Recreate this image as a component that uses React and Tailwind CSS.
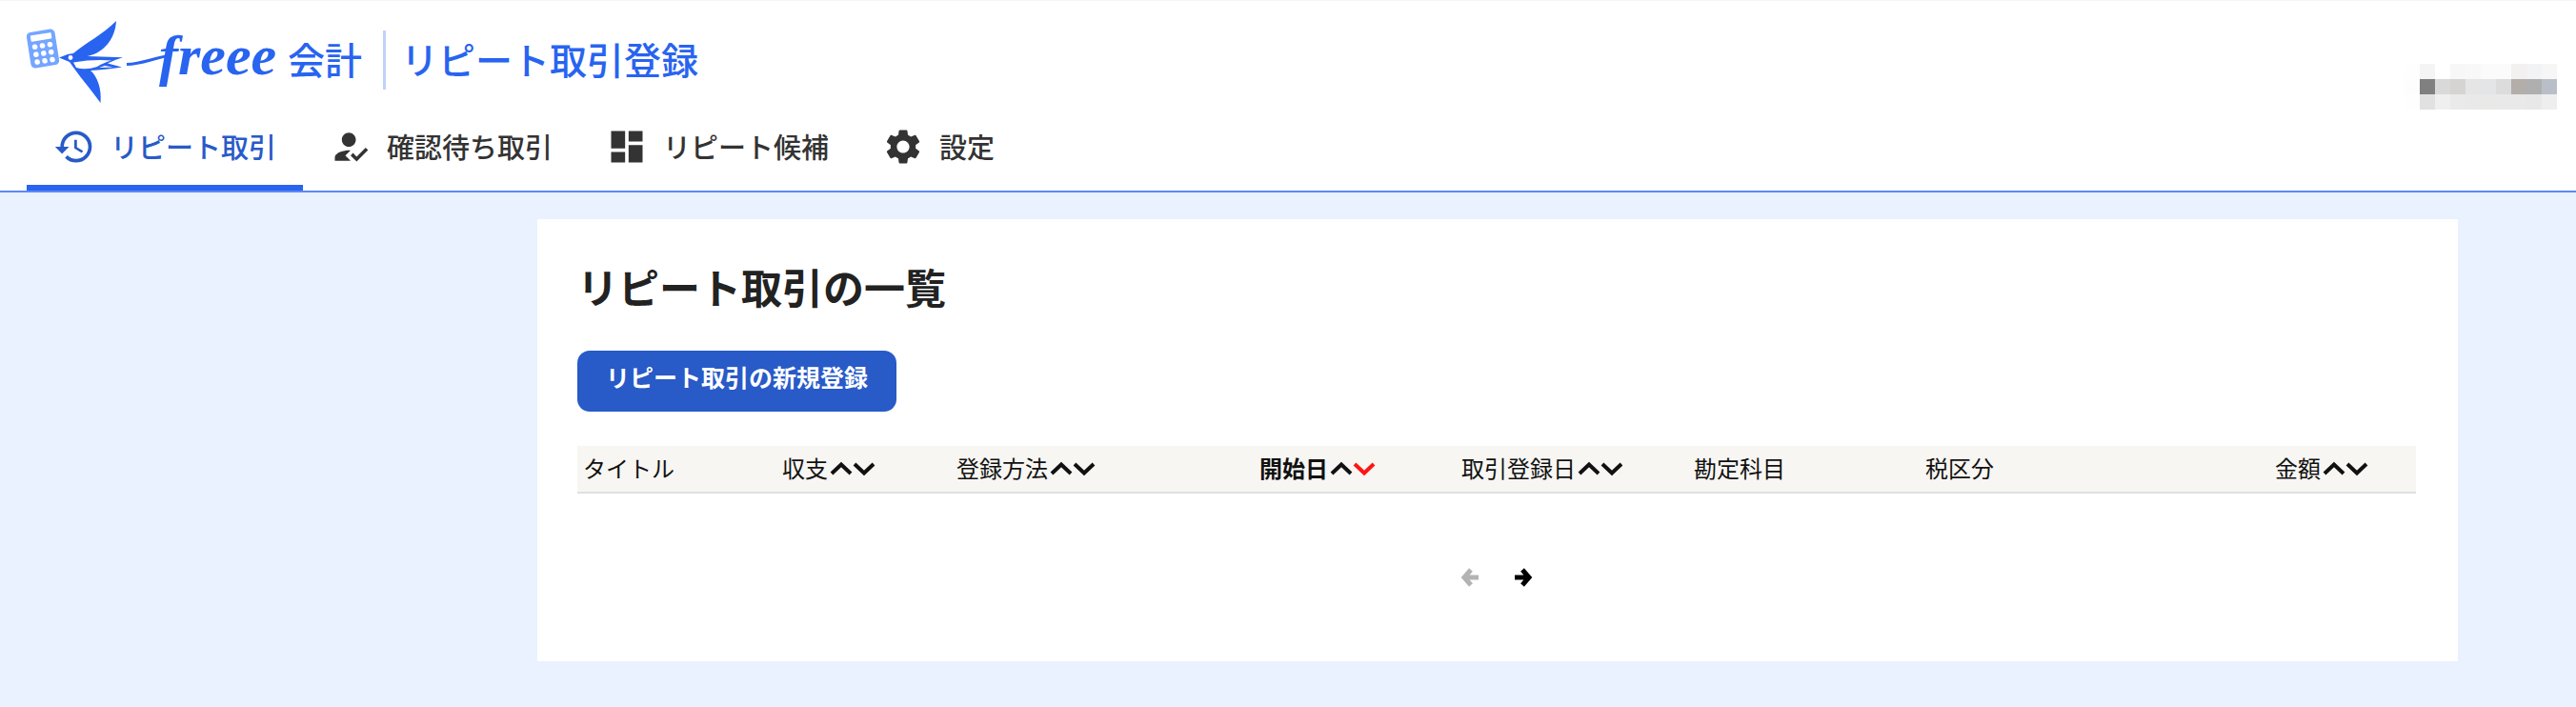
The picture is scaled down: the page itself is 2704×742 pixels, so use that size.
import React from 'react';
import { MdHistory, MdHowToReg, MdDashboard, MdSettings } from 'react-icons/md';

const navItems = [
    { label: 'リピート取引', icon: MdHistory, active: true },
    { label: '確認待ち取引', icon: MdHowToReg },
    { label: 'リピート候補', icon: MdDashboard },
    { label: '設定', icon: MdSettings },
];

const columns = [
    { label: 'タイトル', width: 'w-[209px]' },
    { label: '収支', width: 'w-[183px]', sortable: true },
    { label: '登録方法', width: 'w-[318px]', sortable: true },
    { label: '開始日', width: 'w-[212px]', sortable: true, sorted: 'desc' },
    { label: '取引登録日', width: 'w-[244px]', sortable: true },
    { label: '勘定科目', width: 'w-[243px]' },
    { label: '税区分', width: 'w-[367px]' },
    { label: '金額', width: 'w-[154px]', sortable: true },
];

// pixelated account name
const maskColors = [
    'bg-[#fefefe]', 'bg-[#f4f4f4]', 'bg-[#ffffff]', 'bg-[#f7f7f7]', 'bg-[#f8f8f8]', 'bg-[#fbfbfb]', 'bg-[#fbfbfb]', 'bg-[#f3f1f0]', 'bg-[#f1f3f5]', 'bg-[#f6f6f6]',
    'bg-[#fdfdfd]', 'bg-[#808080]', 'bg-[#d9d9d9]', 'bg-[#d5d4d2]', 'bg-[#e5e5e5]', 'bg-[#e3e5e7]', 'bg-[#dcdcdc]', 'bg-[#b4aeaa]', 'bg-[#afafaf]', 'bg-[#babec8]',
    'bg-[#fefefe]', 'bg-[#e1e1e1]', 'bg-[#efefef]', 'bg-[#eaeaea]', 'bg-[#e9e9e9]', 'bg-[#e9e9e7]', 'bg-[#e9e9e9]', 'bg-[#e9e9e9]', 'bg-[#e8e8e8]', 'bg-[#eeeeee]',
];

const Logo = () => (
    <svg width="264" height="90" viewBox="28 18 264 90" fill="#2864f0">
        <g transform="rotate(-9 45 51)">
            <rect x="30" y="32" width="30" height="38" rx="4.5" fill="#74a6ff" />
            <rect x="34" y="35.5" width="22" height="6.5" rx="1" fill="#fff" />
            {[48, 56, 64].map((y) =>
                [37, 45, 53].map((x) => <circle key={`${x}-${y}`} cx={x} cy={y} r="2.8" fill="#fff" />)
            )}
        </g>
        <path d="M62 60.5L71 57L77 56C90 45 108 36 122 22C121 40 110 55 92 59L129 60.3Q120 63 113 66.5L128 70.5Q110 73 95 74C102 80 107 93 105.5 108C94 92 84 81 73 65Z" />
        <path d="M77 65.5Q98 62 117 63.5Q108 66 102 70Q90 74 80 71Z" fill="#fff" />
        <path d="M110 69L119 70.5L104 71Z" fill="#fff" />
        <circle cx="74" cy="60.5" r="2.4" fill="#fff" />
        <path d="M133 67.5C150 67 160 61 180 58" fill="none" stroke="#2864f0" strokeWidth="3" />
        <text x="167" y="78" fontSize="60" className="font-['Liberation_Serif',serif] font-bold italic">freee</text>
    </svg>
);

const Chevron = ({ down, color }) => (
    <svg width="24" height="16" viewBox="0 0 24 16" fill="none" stroke={color} strokeWidth="4">
        <path d={down ? 'M2 3L12 12.5L22 3' : 'M2 13L12 3.5L22 13'} />
    </svg>
);

const Arrow = ({ left }) => (
    <svg width="20" height="20" viewBox="0 0 20 20" fill="none" stroke="currentColor" strokeWidth="5">
        <path d={left ? 'M19 10H5M11 2L4 10L11 18' : 'M1 10H15M9 2L16 10L9 18'} />
    </svg>
);

const ColumnHeader = ({ label, width, sortable, sorted }) => (
    <th className={`${width} px-1.5 py-0 text-left ${sorted ? 'font-bold' : 'font-normal'}`}>
        <div className="flex h-12 items-center pb-0.5 whitespace-nowrap">
            {label}
            {sortable && (
                <span className="mt-0.5 ml-0.5 flex">
                    <button type="button" aria-label={`${label} 昇順`}>
                        <Chevron color={sorted === 'asc' ? '#ff1414' : '#111'} />
                    </button>
                    <button type="button" aria-label={`${label} 降順`}>
                        <Chevron down color={sorted === 'desc' ? '#ff1414' : '#111'} />
                    </button>
                </span>
            )}
        </div>
    </th>
);

const Header = () => (
    <header className="flex justify-between border-t border-b-2 border-t-[#f5f5f5] border-b-[#5b89f5] bg-white">
        <div>
            <div className="flex items-center pt-[17px] pl-7 text-[39px] leading-[60px] font-medium text-[#2864f0]">
                <Logo />
                <span className="ml-2.5 pb-1">会計</span>
                <span className="mr-4 ml-[22px] h-[62px] w-[3px] bg-[#bfd2fb]"></span>
                <span className="pb-1">リピート取引登録</span>
            </div>
            <nav className="flex pl-7">
                {navItems.map(({ label, icon: Icon, active }) => (
                    <a
                        key={label}
                        href="#"
                        className={`flex h-[92px] items-center gap-4 border-y-[6px] border-t-transparent px-7 text-[29px] font-medium ${
                            active ? 'border-b-[#2864f0] text-[#285ac8]' : 'border-b-transparent text-[#333333]'
                        }`}
                    >
                        <Icon className="size-11" />
                        {label}
                    </a>
                ))}
            </nav>
        </div>
        <div className="mt-[66px] mr-5 grid grid-cols-10 self-start">
            {maskColors.map((color, i) => (
                <span key={i} className={`size-4 ${color}`}></span>
            ))}
        </div>
    </header>
);

const App = () => (
    <div className="min-h-screen bg-[#eaf1ff] font-['Noto_Sans_CJK_JP',sans-serif]">
        <Header />
        <main className="mt-7 mr-[124px] ml-[564px] bg-white pt-[38px] pr-11 pb-[78px] pl-[42px]">
            <h1 className="text-[43px] leading-[64px] font-bold text-[#222222]">リピート取引の一覧</h1>
            <button
                type="button"
                className="mt-9 block h-16 rounded-[13px] bg-[#285ac8] px-[30px] pb-2 text-[25px] font-bold text-white"
            >
                リピート取引の新規登録
            </button>
            <table className="mt-9 w-full table-fixed text-[24px] text-[#111111]">
                <thead className="border-b-2 border-[#dfe0e2] bg-[#f7f6f2]">
                    <tr>
                        {columns.map((column) => (
                            <ColumnHeader key={column.label} {...column} />
                        ))}
                    </tr>
                </thead>
            </table>
            <div className="mt-[78px] flex justify-center gap-9">
                <button type="button" aria-label="前へ" disabled className="text-[#b3b3b3]">
                    <Arrow left />
                </button>
                <button type="button" aria-label="次へ" className="text-black">
                    <Arrow />
                </button>
            </div>
        </main>
    </div>
);

export default App;
